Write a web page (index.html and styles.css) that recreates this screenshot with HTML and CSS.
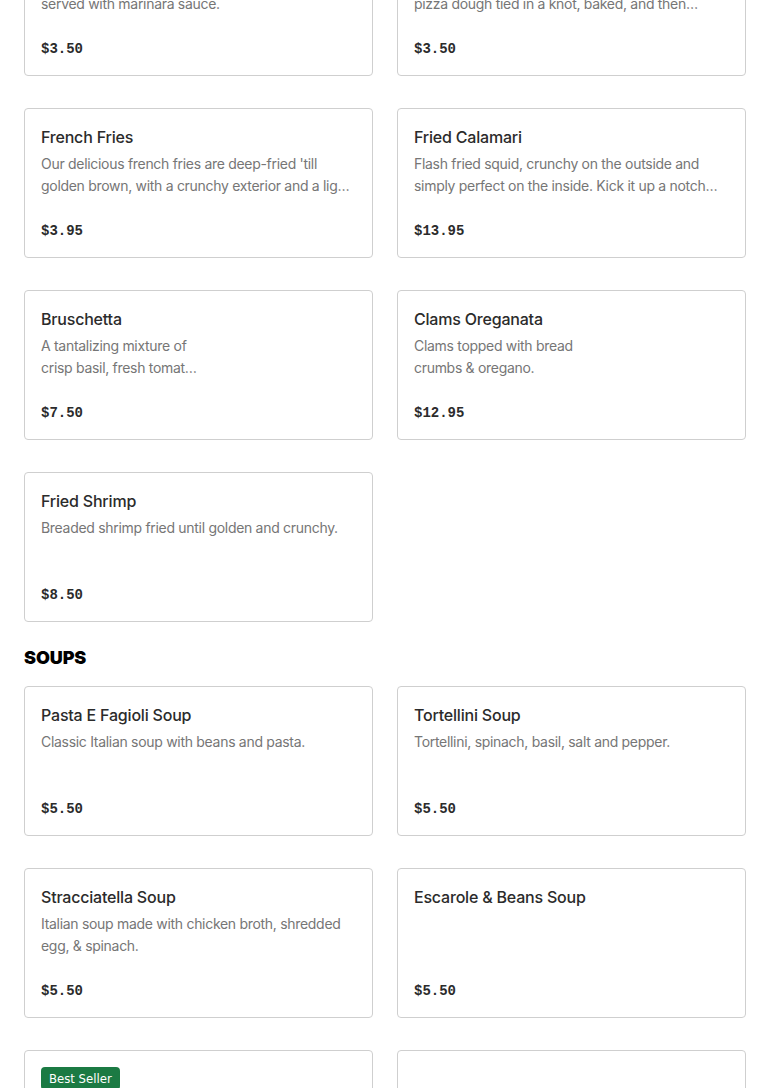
FILE: index.html
```html
<!DOCTYPE html>
<html lang="en">
<head>
<meta charset="utf-8">
<title>Menu</title>
<link rel="stylesheet" href="styles.css">
</head>
<body>
<main class="menu">
  <section class="section section-first">
    <div class="grid">
      <article class="card">
        <h3 class="title">Mozzarella Sticks</h3>
        <p class="desc">Breaded mozzarella sticks fried golden,<br>served with marinara sauce.</p>
        <div class="price">$3.50</div>
      </article>
      <article class="card">
        <h3 class="title">Garlic Knots</h3>
        <p class="desc">Our signature garlic knots are made with fresh<br>pizza dough tied in a knot, baked, and then brushed with garlic butter.</p>
        <div class="price">$3.50</div>
      </article>
      <article class="card">
        <h3 class="title">French Fries</h3>
        <p class="desc">Our delicious french fries are deep-fried 'till golden brown, with a crunchy exterior and a light fluffy interior.</p>
        <div class="price">$3.95</div>
      </article>
      <article class="card">
        <h3 class="title">Fried Calamari</h3>
        <p class="desc">Flash fried squid, crunchy on the outside and simply perfect on the inside. Kick it up a notch with hot peppers.</p>
        <div class="price">$13.95</div>
      </article>
      <article class="card">
        <h3 class="title">Bruschetta</h3>
        <p class="desc">A tantalizing mixture of<br>crisp basil, fresh tomat…</p>
        <div class="price">$7.50</div>
      </article>
      <article class="card">
        <h3 class="title">Clams Oreganata</h3>
        <p class="desc">Clams topped with bread<br>crumbs &amp; oregano.</p>
        <div class="price">$12.95</div>
      </article>
      <article class="card">
        <h3 class="title">Fried Shrimp</h3>
        <p class="desc">Breaded shrimp fried until golden and crunchy.</p>
        <div class="price">$8.50</div>
      </article>
    </div>
  </section>

  <section class="section">
    <h2 class="section-title">SOUPS</h2>
    <div class="grid">
      <article class="card">
        <h3 class="title">Pasta E Fagioli Soup</h3>
        <p class="desc">Classic Italian soup with beans and pasta.</p>
        <div class="price">$5.50</div>
      </article>
      <article class="card">
        <h3 class="title">Tortellini Soup</h3>
        <p class="desc">Tortellini, spinach, basil, salt and pepper.</p>
        <div class="price">$5.50</div>
      </article>
      <article class="card">
        <h3 class="title">Stracciatella Soup</h3>
        <p class="desc">Italian soup made with chicken broth, shredded egg, &amp; spinach.</p>
        <div class="price">$5.50</div>
      </article>
      <article class="card">
        <h3 class="title">Escarole &amp; Beans Soup</h3>
        <p class="desc"></p>
        <div class="price">$5.50</div>
      </article>
      <article class="card card-badged">
        <span class="badge">Best Seller</span>
        <h3 class="title">Minestrone Soup</h3>
        <p class="desc">Hearty vegetable soup with beans and pasta.</p>
        <div class="price">$5.50</div>
      </article>
      <article class="card card-badged">
        <span class="badge badge-spacer">Best Seller</span>
        <h3 class="title">Chicken Noodle Soup</h3>
        <p class="desc">Classic chicken soup with egg noodles.</p>
        <div class="price">$5.50</div>
      </article>
    </div>
  </section>
</main>
</body>
</html>
```

FILE: styles.css
```css
* { box-sizing: border-box; }

html, body {
  margin: 0;
  padding: 0;
  background: #ffffff;
}

body {
  font-family: "Inter", "Open Sans", "Liberation Sans", sans-serif;
  color: #2b2b2b;
  overflow: hidden;
}

.menu {
  padding: 0 24px;
  margin-top: -74px;
}

.grid {
  display: grid;
  grid-template-columns: 1fr 1fr;
  column-gap: 24px;
  row-gap: 32px;
}

.card {
  display: flex;
  flex-direction: column;
  height: 150px;
  padding: 16px 16px 15px;
  border: 1px solid #cfcfcf;
  border-radius: 4px;
  background: #ffffff;
}

.card-badged {
  height: 190px;
}

.title {
  margin: 0 0 4px;
  font-size: 16px;
  line-height: 24px;
  font-weight: 500;
  color: #2b2b2b;
  letter-spacing: -0.2px;
}

.desc {
  margin: 0;
  font-size: 14px;
  line-height: 22px;
  height: 44px;
  color: #767676;
  overflow: hidden;
  display: -webkit-box;
  -webkit-line-clamp: 2;
  -webkit-box-orient: vertical;
  letter-spacing: -0.3px;
}

.price {
  margin-top: auto;
  font-family: "Liberation Mono", "DejaVu Sans Mono", monospace;
  font-weight: 700;
  font-size: 14px;
  line-height: 22px;
  color: #2b2b2b;
}

.section-title {
  margin: 24px 0 16px;
  font-size: 18px;
  line-height: 24px;
  font-weight: 900;
  color: #000000;
  letter-spacing: -0.1px;
}

.badge {
  align-self: flex-start;
  display: inline-block;
  background: #1b7a43;
  color: #ffffff;
  font-family: "DejaVu Sans Condensed", "Liberation Sans Narrow", "Roboto", sans-serif;
  font-stretch: condensed;
  font-size: 13px;
  line-height: 15px;
  padding: 4px 8px;
  border-radius: 4px;
  margin-bottom: 8px;
}

.badge-spacer {
  visibility: hidden;
}
```
